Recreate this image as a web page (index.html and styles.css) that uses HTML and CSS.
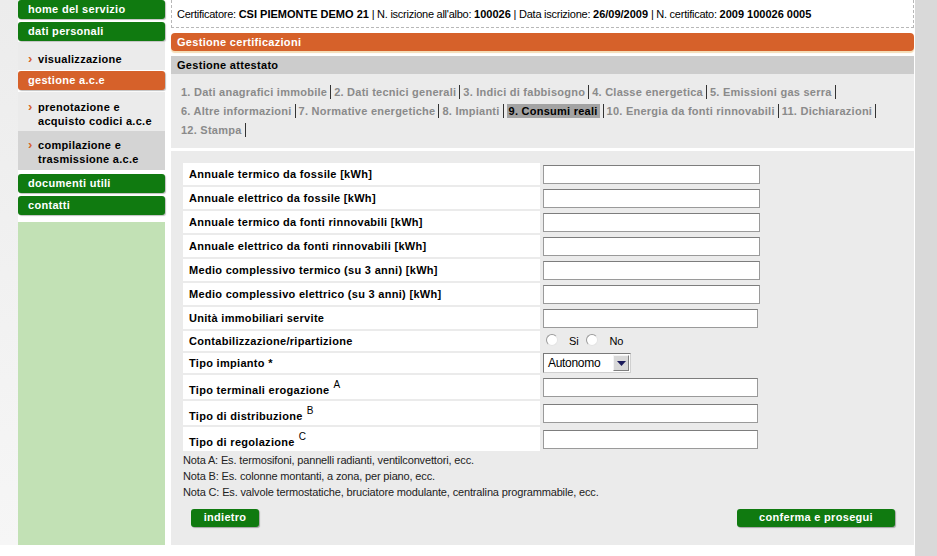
FILE: index.html
```html
<!DOCTYPE html>
<html lang="it">
<head>
<meta charset="utf-8">
<title>Gestione attestato</title>
<link rel="stylesheet" href="styles.css">
</head>
<body>
<div class="page">
  <div class="strip-left"></div>
  <nav class="sidebar">
    <a class="nav-btn green">home del servizio</a>
    <a class="nav-btn green">dati personali</a>
    <div class="sub sub-one"><span class="arrow">›</span><span>visualizzazione</span></div>
    <a class="nav-btn orange">gestione a.c.e</a>
    <div class="sub sub-two"><span class="arrow">›</span><span>prenotazione e<br>acquisto codici a.c.e</span></div>
    <div class="sub sub-two active"><span class="arrow">›</span><span>compilazione e<br>trasmissione a.c.e</span></div>
    <a class="nav-btn green first-after">documenti utili</a>
    <a class="nav-btn green">contatti</a>
    <div class="side-fill"></div>
  </nav>
  <main class="main">
    <div class="info">Certificatore: <b>CSI PIEMONTE DEMO 21</b> | N. iscrizione all'albo: <b>100026</b> | Data iscrizione: <b>26/09/2009</b> | N. certificato: <b>2009 100026 0005</b></div>
    <div class="bar-orange">Gestione certificazioni</div>
    <div class="bar-gray">Gestione attestato</div>
    <div class="tabs">
      <span class="tab">1. Dati anagrafici immobile</span><span class="sep"></span><span class="tab">2. Dati tecnici generali</span><span class="sep"></span><span class="tab">3. Indici di fabbisogno</span><span class="sep"></span><span class="tab">4. Classe energetica</span><span class="sep"></span><span class="tab">5. Emissioni gas serra</span><span class="sep"></span><br>
      <span class="tab">6. Altre informazioni</span><span class="sep"></span><span class="tab">7. Normative energetiche</span><span class="sep"></span><span class="tab">8. Impianti</span><span class="sep"></span><span class="tab current">9. Consumi reali</span><span class="sep"></span><span class="tab">10. Energia da fonti rinnovabili</span><span class="sep"></span><span class="tab">11. Dichiarazioni</span><span class="sep"></span><br>
      <span class="tab">12. Stampa</span><span class="sep"></span>
    </div>
    <div class="form">
      <div class="rows">
        <div class="row"><div class="label">Annuale termico da fossile [kWh]</div><div class="field"><span class="input"></span></div></div>
        <div class="row"><div class="label">Annuale elettrico da fossile [kWh]</div><div class="field"><span class="input"></span></div></div>
        <div class="row"><div class="label">Annuale termico da fonti rinnovabili [kWh]</div><div class="field"><span class="input"></span></div></div>
        <div class="row"><div class="label">Annuale elettrico da fonti rinnovabili [kWh]</div><div class="field"><span class="input"></span></div></div>
        <div class="row"><div class="label">Medio complessivo termico (su 3 anni) [kWh]</div><div class="field"><span class="input"></span></div></div>
        <div class="row"><div class="label">Medio complessivo elettrico (su 3 anni) [kWh]</div><div class="field"><span class="input"></span></div></div>
        <div class="row"><div class="label">Unità immobiliari servite</div><div class="field"><span class="input narrow"></span></div></div>
        <div class="row short"><div class="label">Contabilizzazione/ripartizione</div><div class="field radios"><span class="radio"></span><span class="rlabel">Si</span><span class="radio"></span><span class="rlabel">No</span></div></div>
        <div class="row short"><div class="label">Tipo impianto *</div><div class="field"><span class="select"><span class="sel-text">Autonomo</span><span class="sel-btn"><svg width="9" height="5" viewBox="0 0 9 5"><path d="M0 0h9L4.5 5z" fill="#1a1a5a"/></svg></span></span></div></div>
        <div class="row tall"><div class="label">Tipo terminali erogazione <sup>A</sup></div><div class="field"><span class="input narrow"></span></div></div>
        <div class="row tall"><div class="label">Tipo di distribuzione <sup>B</sup></div><div class="field"><span class="input narrow"></span></div></div>
        <div class="row tall"><div class="label">Tipo di regolazione <sup>C</sup></div><div class="field"><span class="input narrow"></span></div></div>
      </div>
      <div class="notes">
        <p>Nota A: Es. termosifoni, pannelli radianti, ventilconvettori, ecc.</p>
        <p>Nota B: Es. colonne montanti, a zona, per piano, ecc.</p>
        <p>Nota C: Es. valvole termostatiche, bruciatore modulante, centralina programmabile, ecc.</p>
      </div>
      <div class="actions">
        <a class="btn btn-back">indietro</a>
        <a class="btn btn-next">conferma e prosegui</a>
      </div>
    </div>
  </main>
  <div class="strip-right"></div>
</div>
</body>
</html>
```
FILE: styles.css
```css
html, body {
  margin: 0;
  padding: 0;
  background: #ffffff;
}
body {
  font-family: "Liberation Sans", Arial, sans-serif;
  font-size: 11px;
  color: #000;
  letter-spacing: -0.15px;
}
b, .nav-btn, .sub, .bar-orange, .bar-gray, .tab, .label, .btn {
  letter-spacing: 0.3px;
}
.page {
  display: flex;
  align-items: flex-start;
  width: 937px;
  height: 556px;
  overflow: hidden;
}
.strip-left {
  width: 18px;
  height: 545px;
  flex: none;
  background: linear-gradient(#ececec, #f6f6f6);
}
.sidebar {
  width: 147px;
  flex: none;
  display: flex;
  flex-direction: column;
}
.nav-btn {
  display: block;
  height: 19px;
  line-height: 19px;
  padding-left: 10px;
  color: #fff;
  font-weight: bold;
  font-size: 11px;
  border-radius: 3px;
  box-shadow: 1px 1px 1px rgba(0,0,0,0.25);
}
.nav-btn + .nav-btn { margin-top: 3px; }
.green { background: #107a10; }
.orange { background: #d6612a; }
.first-after { margin-top: 4px; }
.sub {
  display: flex;
  align-items: flex-start;
  background: #ebebeb;
  color: #000;
  font-weight: bold;
  font-size: 11px;
  line-height: 14px;
  padding-left: 10px;
}
.sub-one {
  height: 28px;
  padding-top: 10px;
  box-sizing: border-box;
  margin-top: 1px;
  margin-bottom: 1px;
}
.sub-two {
  height: 39px;
  padding-top: 8px;
  box-sizing: border-box;
}
.nav-btn.orange + .sub { margin-top: 2px; }
.sub.active { background: #d4d4d4; height: 39px; padding-top: 7px; }
.arrow {
  color: #d6612a;
  font-weight: bold;
  width: 10px;
  font-size: 13px;
  line-height: 14px;
  flex: none;
}
.side-fill {
  margin-top: 7px;
  height: 323px;
  background: #c2e1b5;
}
.main {
  width: 743px;
  margin-left: 6px;
  flex: none;
}
.strip-right {
  margin-left: 1px;
  flex: 1;
  height: 556px;
  background: #d9d9d9;
}
.info {
  height: 27px;
  line-height: 28px;
  border: 1px dashed #b8b8b8;
  border-top: none;
  padding-left: 5px;
  color: #000;
  letter-spacing: -0.25px;
}
.info b { letter-spacing: 0; }
.bar-orange {
  margin-top: 5px;
  height: 18px;
  line-height: 18px;
  background: #d6612a;
  color: #fff;
  font-weight: bold;
  padding-left: 6px;
  border-radius: 4px;
  box-shadow: 0 2px 1px #f3dcb6;
}
.bar-gray {
  margin-top: 5px;
  height: 18px;
  line-height: 18px;
  background: #cccccc;
  font-weight: bold;
  padding-left: 6px;
}
.tabs {
  background: #ebebeb;
  height: 74px;
  box-sizing: border-box;
  padding: 9px 0 0 10px;
  line-height: 19px;
}
.tab {
  color: #8a8a8a;
  font-weight: bold;
  letter-spacing: 0.25px;
}
.tab.current {
  background: #a3a3a3;
  color: #000;
  padding: 1px 2px;
}
.sep {
  display: inline-block;
  width: 1px;
  height: 14px;
  background: #333;
  vertical-align: -3px;
  margin: 0 3px;
}
.form {
  margin-top: 3px;
  background: #ebebeb;
  height: 394px;
  box-sizing: border-box;
  padding: 12px 0 0 12px;
}
.rows {
  display: flex;
  flex-direction: column;
  gap: 2px;
}
.row {
  display: flex;
  height: 22px;
}
.row.short { height: 20px; }
.row.tall { height: 24px; }
.label {
  width: 357px;
  background: #fff;
  font-weight: bold;
  padding-left: 6px;
  box-sizing: border-box;
  display: flex;
  align-items: center;
}
.tall .label { align-items: flex-end; padding-bottom: 3px; }
.label sup {
  font-size: 10px;
  font-weight: normal;
  margin-left: 4px;
  position: relative;
  top: -6px;
  vertical-align: baseline;
  letter-spacing: 0;
}
.field {
  padding-left: 3px;
  display: flex;
  align-items: center;
}
.input {
  display: block;
  width: 217px;
  height: 19px;
  box-sizing: border-box;
  background: #fff;
  border: 1px solid #9a9a9a;
  border-top-color: #7d7d7d;
}
.input.narrow { width: 215px; }
.radios { padding-left: 6px; }
.radio {
  width: 10px;
  height: 10px;
  border-radius: 50%;
  border: 1px solid #9a9a9a;
  border-right-color: #e4e4e4;
  border-bottom-color: #e4e4e4;
  background: #fff;
  margin-top: -3px;
}
.rlabel { margin: 0 8px 0 11px; }
.select {
  display: flex;
  align-items: center;
  width: 88px;
  height: 20px;
  box-sizing: border-box;
  border: 1px solid #7a7a7a;
  border-right-color: #d0d0d0;
  border-bottom-color: #d0d0d0;
  background: #fff;
  padding: 1px;
}
.sel-text { flex: 1; padding-left: 3px; font-size: 12px; letter-spacing: -0.3px; }
.sel-btn {
  width: 16px;
  height: 16px;
  box-sizing: border-box;
  background: #d8d8d8;
  border: 1px solid #f4f4f4;
  border-right-color: #808080;
  border-bottom-color: #808080;
  display: flex;
  align-items: center;
  justify-content: center;
}
.notes p {
  margin: 0;
  line-height: 16px;
  color: #222;
}
.notes { margin-top: 1px; }
.actions {
  display: flex;
  justify-content: space-between;
  margin-top: 9px;
  padding-left: 8px;
  width: 704px;
}
.btn {
  display: block;
  height: 18px;
  line-height: 17px;
  text-align: center;
  color: #fff;
  font-weight: bold;
  background: #107a10;
  border-radius: 3px;
  box-shadow: 1px 1px 1px rgba(0,0,0,0.3);
}
.btn-back { width: 68px; }
.btn-next { width: 158px; }
```
